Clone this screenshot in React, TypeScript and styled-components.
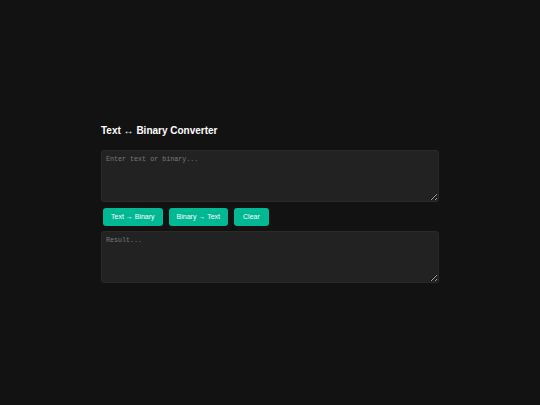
import React, { useState } from "react";
import styled, { createGlobalStyle } from "styled-components";

const Global = createGlobalStyle`
  html, body { margin: 0; padding: 0; background: #121212; }
  body { font-family: "Liberation Sans", Arial, sans-serif; color: #fff; }
  * { box-sizing: border-box; }
`;

const Page = styled.div`
  min-height: 405px;
  display: flex;
  align-items: center;
  justify-content: center;
`;

const Card = styled.div`
  width: 338px;
  display: flex;
  flex-direction: column;
  margin-top: 2px;
`;

const Title = styled.h2`
  margin: 0 0 13px 0;
  font-size: 10px;
  line-height: 12px;
  font-weight: bold;
  color: #fff;
`;

const Area = styled.textarea`
  width: 100%;
  height: 52px;
  background: #222222;
  border: 1px solid #2a2a2a;
  border-radius: 3px;
  color: #ddd;
  font-family: "Liberation Mono", "DejaVu Sans Mono", monospace;
  font-size: 6.7px;
  line-height: 9px;
  padding: 4px 4px;
  resize: vertical;
  outline: none;
  display: block;
  &::placeholder { color: #7a7a7a; }
`;

const Buttons = styled.div`
  display: flex;
  gap: 6px;
  padding: 6px 2px 5px;
`;

const Btn = styled.button`
  height: 18px;
  padding: 0 8px;
  background: #00b894;
  color: #fff;
  border: none;
  border-radius: 3px;
  font-family: "Liberation Sans", Arial, sans-serif;
  font-size: 7px;
  cursor: pointer;
`;

const Clear = styled(Btn)`
  padding: 0 9px;
`;

export default function App() {
  const [input, setInput] = useState("");
  const [result, setResult] = useState("");
  const toBinary = () =>
    setResult(
      Array.from(input)
        .map((c) => c.charCodeAt(0).toString(2).padStart(8, "0"))
        .join(" ")
    );
  const toText = () =>
    setResult(
      input
        .trim()
        .split(/\s+/)
        .filter(Boolean)
        .map((b) => String.fromCharCode(parseInt(b, 2)))
        .join("")
    );
  return (
    <>
      <Global />
      <Page>
        <Card>
          <Title>Text ↔ Binary Converter</Title>
          <Area
            placeholder="Enter text or binary..."
            value={input}
            onChange={(e) => setInput(e.target.value)}
          />
          <Buttons>
            <Btn onClick={toBinary}>Text → Binary</Btn>
            <Btn onClick={toText}>Binary → Text</Btn>
            <Clear onClick={() => { setInput(""); setResult(""); }}>Clear</Clear>
          </Buttons>
          <Area placeholder="Result..." value={result} readOnly />
        </Card>
      </Page>
    </>
  );
}
